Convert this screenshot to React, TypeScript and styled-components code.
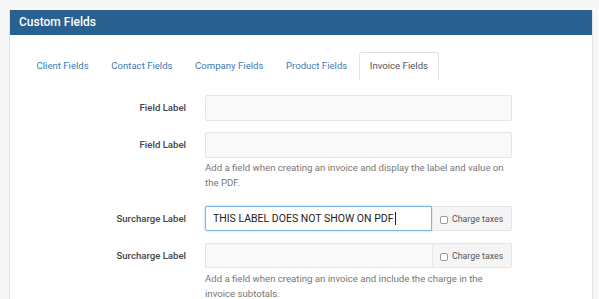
import React from "react";
import styled, { createGlobalStyle } from "styled-components";

const GlobalStyle = createGlobalStyle`
  body {
    margin: 0;
    background: #f7f7f7;
    font-family: Roboto, "Liberation Sans", sans-serif;
    overflow: hidden;
  }
`;

const tabs = ["Client Fields", "Contact Fields", "Company Fields", "Product Fields", "Invoice Fields"];

const Custom: React.FunctionComponent = () => {
  return (
    <Page>
      <GlobalStyle />
      <Panel>
        <Heading>Custom Fields</Heading>
        <Body>
          <Tabs>
            {tabs.map((t) => (
              <Tab key={t} active={t === "Invoice Fields"}>
                {t}
              </Tab>
            ))}
          </Tabs>
          <Form>
            <Group>
              <Label>Field Label</Label>
              <Input />
            </Group>
            <Group spaced>
              <Label>Field Label</Label>
              <Input />
              <Help>Add a field when creating an invoice and display the label and value on the PDF.</Help>
            </Group>
            <Group>
              <Label>Surcharge Label</Label>
              <InputGroup>
                <FocusedInput>
                  THIS LABEL DOES NOT SHOW ON PDF
                  <Caret />
                </FocusedInput>
                <Addon>
                  <Check type="checkbox" readOnly />
                  Charge taxes
                </Addon>
              </InputGroup>
            </Group>
            <Group>
              <Label>Surcharge Label</Label>
              <InputGroup>
                <GroupInput />
                <Addon>
                  <Check type="checkbox" readOnly />
                  Charge taxes
                </Addon>
              </InputGroup>
              <Help>Add a field when creating an invoice and include the charge in the invoice subtotals.</Help>
            </Group>
          </Form>
        </Body>
      </Panel>
    </Page>
  );
};

const Page = styled.div`
  padding: 9px 6px 0 9px;
`;
const Panel = styled.div`
  border: 1px solid #e2e4e6;
  border-top: none;
  background: #fff;
  height: 300px;
`;
const Heading = styled.div`
  background: #28608f;
  color: #fff;
  height: 25px;
  line-height: 25px;
  padding-left: 9px;
  font-size: 12px;
  font-weight: 500;
  margin-top: 1px;
`;
const Body = styled.div`
  padding-top: 17px;
`;
const Tabs = styled.div`
  display: flex;
  margin-left: 16px;
`;
const Tab = styled.div<{ active?: boolean }>`
  height: 27px;
  line-height: 25px;
  padding: 0 9.5px;
  margin-right: 1.5px;
  font-size: 9.6px;
  color: ${(p) => (p.active ? "#555" : "#3f79b4")};
  border: 1px solid ${(p) => (p.active ? "#e1e1e1" : "transparent")};
  border-bottom: none;
  border-radius: 3px 3px 0 0;
`;
const Form = styled.div`
  padding-top: 15px;
`;
const Group = styled.div<{ spaced?: boolean }>`
  display: grid;
  grid-template-columns: 176px 307px;
  column-gap: 19px;
  margin-bottom: ${(p) => (p.spaced ? "16px" : "11px")};
`;
const Label = styled.div`
  grid-column: 1;
  text-align: right;
  height: 26px;
  line-height: 26px;
  font-size: 9.6px;
  font-weight: 500;
  color: #444;
`;
const Input = styled.input`
  grid-column: 2;
  box-sizing: border-box;
  height: 26px;
  width: 100%;
  margin: 0;
  background: #f9f9f9;
  border: 1px solid #e4e4e4;
  border-radius: 2px;
  outline: none;
`;
const InputGroup = styled.div`
  grid-column: 2;
  display: flex;
  height: 25px;
`;
const FocusedInput = styled.div`
  flex: 1;
  display: flex;
  align-items: center;
  padding-left: 7px;
  background: #fff;
  border: 1px solid #7db4e4;
  box-shadow: 0 0 3px rgba(102, 175, 233, 0.55);
  border-radius: 2px 0 0 2px;
  font-size: 10.5px;
  color: #222;
`;
const Caret = styled.span`
  display: inline-block;
  width: 1px;
  height: 13px;
  background: #222;
  margin-left: 1px;
`;
const GroupInput = styled.div`
  flex: 1;
  background: #f9f9f9;
  border: 1px solid #e4e4e4;
  border-right: none;
  border-radius: 2px 0 0 2px;
`;
const Addon = styled.div`
  width: 80px;
  box-sizing: border-box;
  display: flex;
  align-items: center;
  padding-left: 5px;
  background: #f5f5f5;
  border: 1px solid #e4e4e4;
  border-left: 1px solid #e8e8e8;
  border-radius: 0 2px 2px 0;
  font-size: 8.8px;
  color: #555;
`;
const Check = styled.input`
  appearance: none;
  width: 8px;
  height: 8px;
  margin: 2px 4px 0 2px;
  border: 1px solid #9a9a9a;
  border-radius: 2px;
  background: #fff;
`;
const Help = styled.div`
  grid-column: 2;
  margin-top: 2px;
  font-size: 9.6px;
  line-height: 15px;
  color: #777;
`;

export default Custom;
